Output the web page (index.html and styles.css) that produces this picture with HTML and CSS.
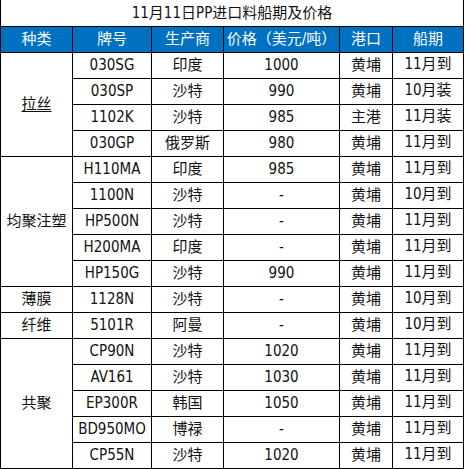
FILE: index.html
```html
<!DOCTYPE html>
<html lang="zh">
<head>
    <meta charset="UTF-8">
    <meta name="viewport" content="width=device-width, initial-scale=1.0">
    <title>11月11日PP进口料船期及价格</title>
    <link rel="stylesheet" href="styles.css">
</head>
<body>
    <div class="sheet">
        <div class="title">11月11日PP进口料船期及价格</div>

        <div class="head">种类</div>
        <div class="head">牌号</div>
        <div class="head">生产商</div>
        <div class="head">价格（美元/吨）</div>
        <div class="head">港口</div>
        <div class="head">船期</div>

        <div class="cell kind span-4"><u>拉丝</u></div>
        <div class="cell">030SG</div><div class="cell">印度</div><div class="cell">1000</div><div class="cell">黄埔</div><div class="cell date">11月到</div>
        <div class="cell">030SP</div><div class="cell">沙特</div><div class="cell">990</div><div class="cell">黄埔</div><div class="cell date">10月装</div>
        <div class="cell">1102K</div><div class="cell">沙特</div><div class="cell">985</div><div class="cell">主港</div><div class="cell date">11月装</div>
        <div class="cell">030GP</div><div class="cell">俄罗斯</div><div class="cell">980</div><div class="cell">黄埔</div><div class="cell date">11月到</div>

        <div class="cell kind span-5">均聚注塑</div>
        <div class="cell">H110MA</div><div class="cell">印度</div><div class="cell">985</div><div class="cell">黄埔</div><div class="cell date">11月到</div>
        <div class="cell">1100N</div><div class="cell">沙特</div><div class="cell">-</div><div class="cell">黄埔</div><div class="cell date">10月到</div>
        <div class="cell">HP500N</div><div class="cell">沙特</div><div class="cell">-</div><div class="cell">黄埔</div><div class="cell date">11月到</div>
        <div class="cell">H200MA</div><div class="cell">印度</div><div class="cell">-</div><div class="cell">黄埔</div><div class="cell date">11月到</div>
        <div class="cell">HP150G</div><div class="cell">沙特</div><div class="cell">990</div><div class="cell">黄埔</div><div class="cell date">11月到</div>

        <div class="cell kind">薄膜</div>
        <div class="cell">1128N</div><div class="cell">沙特</div><div class="cell">-</div><div class="cell">黄埔</div><div class="cell date">10月到</div>

        <div class="cell kind">纤维</div>
        <div class="cell">5101R</div><div class="cell">阿曼</div><div class="cell">-</div><div class="cell">黄埔</div><div class="cell date">10月到</div>

        <div class="cell kind span-5">共聚</div>
        <div class="cell">CP90N</div><div class="cell">沙特</div><div class="cell">1020</div><div class="cell">黄埔</div><div class="cell date">11月到</div>
        <div class="cell">AV161</div><div class="cell">沙特</div><div class="cell">1030</div><div class="cell">黄埔</div><div class="cell date">11月到</div>
        <div class="cell">EP300R</div><div class="cell">韩国</div><div class="cell">1050</div><div class="cell">黄埔</div><div class="cell date">11月到</div>
        <div class="cell">BD950MO</div><div class="cell">博禄</div><div class="cell">-</div><div class="cell">黄埔</div><div class="cell date">11月到</div>
        <div class="cell">CP55N</div><div class="cell">沙特</div><div class="cell">1020</div><div class="cell">黄埔</div><div class="cell date">11月到</div>
    </div>
</body>
</html>
```

FILE: styles.css
```css
body {
    margin: 0;
    background: #fff;
    font-family: "DejaVu Sans Condensed", "DejaVu Sans", "Noto Sans CJK SC", sans-serif;
    font-size: 15px;
    color: #111;
}
.sheet {
    display: grid;
    grid-template-columns: 71px 78px 71px 115px 52px 70px;
    grid-template-rows: 26px repeat(17, 25px);
    gap: 1px;
    padding: 0 1px 1px 1px;
    width: 462px;
    background: #000;
}
.title,
.head,
.cell {
    display: flex;
    align-items: center;
    justify-content: center;
    line-height: 1;
    white-space: nowrap;
}
.title {
    grid-column: 1 / -1;
    background: #fff;
    padding-top: 1px;
}
.head {
    background: #0070c0;
    color: #fff;
}
.cell {
    background: #fff;
}
.date {
    padding-bottom: 3px;
}
.kind u {
    text-underline-offset: 2px;
}
.span-4 {
    grid-row: span 4;
}
.span-5 {
    grid-row: span 5;
}
```
